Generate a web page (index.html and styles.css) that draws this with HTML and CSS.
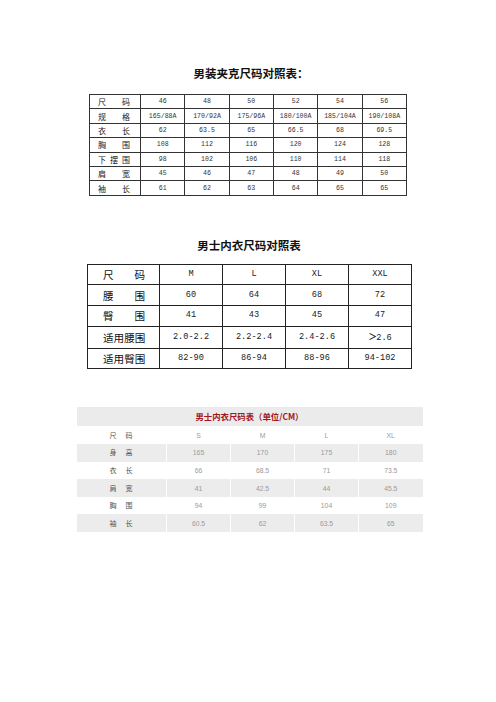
FILE: index.html
```html
<!DOCTYPE html>
<html lang="zh">
<head>
<meta charset="utf-8">
<title>尺码对照表</title>
<link rel="stylesheet" href="styles.css">
</head>
<body>
<div class="page">
  <h2 class="title t1">男装夹克尺码对照表：</h2>
  <table class="tb1">
    <colgroup><col class="c1"><col><col><col><col><col><col></colgroup>
    <tr><td class="lbl"><div class="sp"><i>尺</i><i>码</i></div></td><td>46</td><td>48</td><td>50</td><td>52</td><td>54</td><td>56</td></tr>
    <tr><td class="lbl"><div class="sp"><i>规</i><i>格</i></div></td><td>165/88A</td><td>170/92A</td><td>175/96A</td><td>180/100A</td><td>185/104A</td><td>190/108A</td></tr>
    <tr><td class="lbl"><div class="sp"><i>衣</i><i>长</i></div></td><td>62</td><td>63.5</td><td>65</td><td>66.5</td><td>68</td><td>69.5</td></tr>
    <tr><td class="lbl"><div class="sp"><i>胸</i><i>围</i></div></td><td>108</td><td>112</td><td>116</td><td>120</td><td>124</td><td>128</td></tr>
    <tr><td class="lbl"><div class="sp"><i>下</i><i>摆</i><i>围</i></div></td><td>98</td><td>102</td><td>106</td><td>110</td><td>114</td><td>118</td></tr>
    <tr><td class="lbl"><div class="sp"><i>肩</i><i>宽</i></div></td><td>45</td><td>46</td><td>47</td><td>48</td><td>49</td><td>50</td></tr>
    <tr><td class="lbl"><div class="sp"><i>袖</i><i>长</i></div></td><td>61</td><td>62</td><td>63</td><td>64</td><td>65</td><td>65</td></tr>
  </table>

  <h2 class="title t2">男士内衣尺码对照表</h2>
  <table class="tb2">
    <colgroup><col class="c1"><col><col><col><col></colgroup>
    <tr><td class="lbl"><div class="sp"><i>尺</i><i>码</i></div></td><td>M</td><td>L</td><td>XL</td><td>XXL</td></tr>
    <tr><td class="lbl"><div class="sp"><i>腰</i><i>围</i></div></td><td>60</td><td>64</td><td>68</td><td>72</td></tr>
    <tr><td class="lbl"><div class="sp"><i>臀</i><i>围</i></div></td><td>41</td><td>43</td><td>45</td><td>47</td></tr>
    <tr><td class="lbl"><div class="sp"><i>适</i><i>用</i><i>腰</i><i>围</i></div></td><td>2.0-2.2</td><td>2.2-2.4</td><td>2.4-2.6</td><td><span class="gt">＞</span>2.6</td></tr>
    <tr><td class="lbl"><div class="sp"><i>适</i><i>用</i><i>臀</i><i>围</i></div></td><td>82-90</td><td>86-94</td><td>88-96</td><td>94-102</td></tr>
  </table>

  <div class="box3">
    <div class="cap">男士内衣尺码表（单位/CM）</div>
    <table class="tb3">
      <colgroup><col class="c1"><col><col><col><col></colgroup>
      <tr><td class="lbl"><span class="sp3"><i>尺</i><i>码</i></span></td><td>S</td><td>M</td><td>L</td><td>XL</td></tr>
      <tr class="g"><td class="lbl"><span class="sp3"><i>身</i><i>高</i></span></td><td>165</td><td>170</td><td>175</td><td>180</td></tr>
      <tr><td class="lbl"><span class="sp3"><i>衣</i><i>长</i></span></td><td>66</td><td>68.5</td><td>71</td><td>73.5</td></tr>
      <tr class="g"><td class="lbl"><span class="sp3"><i>肩</i><i>宽</i></span></td><td>41</td><td>42.5</td><td>44</td><td>45.5</td></tr>
      <tr><td class="lbl"><span class="sp3"><i>胸</i><i>围</i></span></td><td>94</td><td>99</td><td>104</td><td>109</td></tr>
      <tr class="g"><td class="lbl"><span class="sp3"><i>袖</i><i>长</i></span></td><td>60.5</td><td>62</td><td>63.5</td><td>65</td></tr>
    </table>
  </div>
</div>
</body>
</html>
```

FILE: styles.css
```css
html, body {
  margin: 0;
  padding: 0;
  background: #ffffff;
}

.page {
  width: 496px;
  height: 702px;
  padding-top: 66px;
  box-sizing: border-box;
  display: flex;
  flex-direction: column;
  align-items: center;
  font-family: "Noto Sans CJK SC", sans-serif;
  color: #222;
}

.title {
  margin: 0;
  font-size: 11.5px;
  line-height: 14px;
  font-weight: 700;
  color: #111;
  text-align: center;
}

.t1 { margin-left: 6px; }
.t2 { margin-top: 42px; margin-left: 2px; }

table {
  border-collapse: collapse;
  table-layout: fixed;
}

table i {
  font-style: normal;
}

.sp {
  display: flex;
  justify-content: space-between;
}

/* Table 1: jacket sizes */
.tb1 {
  width: 318px;
  margin-top: 14px;
}
.tb1 .c1 { width: 51px; }
.tb1 td {
  border: 1px solid #333;
  height: 13.4px;
  padding: 0;
  text-align: center;
  font-family: "Liberation Mono", "DejaVu Sans Mono", monospace;
  font-size: 6.6px;
  line-height: 13px;
  color: #333;
}
.tb1 td.lbl {
  font-family: "Noto Sans CJK SC", sans-serif;
  font-size: 8px;
  color: #222;
  padding: 0 10px 0 8px;
}

/* Table 2: underwear sizes */
.tb2 {
  width: 325px;
  margin-top: 12px;
  margin-left: 3px;
}
.tb2 .c1 { width: 72px; }
.tb2 td {
  border: 1px solid #222;
  height: 19.6px;
  padding: 0;
  text-align: center;
  font-family: "Liberation Mono", "DejaVu Sans Mono", monospace;
  font-size: 8.6px;
  line-height: 19px;
  color: #222;
}
.tb2 td.lbl {
  font-family: "Noto Sans CJK SC", sans-serif;
  font-size: 10.6px;
  color: #111;
  padding: 0 14px 0 15px;
}
.tb2 .gt {
  font-family: "Noto Sans CJK SC", sans-serif;
  font-weight: 700;
  font-size: 9px;
  margin-right: -1px;
}

/* Table 3: grey striped table */
.box3 {
  width: 346px;
  margin-top: 38px;
  margin-left: 3px;
}
.cap {
  background: #ebebeb;
  height: 19px;
  line-height: 19px;
  text-align: center;
  font-size: 8.4px;
  font-weight: 700;
  color: #a3161c;
}
.tb3 {
  width: 346px;
}
.tb3 .c1 { width: 90px; }
.tb3 td {
  height: 17.6px;
  padding: 0;
  border-left: 1px solid #ffffff;
  text-align: center;
  font-family: "Liberation Sans", Arial, sans-serif;
  font-size: 6.8px;
  line-height: 17px;
  color: #9a9a9a;
}
.tb3 tr:first-child td { height: 18px; }
.tb3 td:first-child { border-left: 0; }
.tb3 tr.g td { background: #ececec; }
.tb3 td.lbl {
  text-align: left;
  padding-left: 33px;
  font-family: "Noto Sans CJK SC", sans-serif;
  font-size: 7px;
  color: #555;
}
.sp3 {
  display: inline-flex;
  width: 23px;
  justify-content: space-between;
}
```
